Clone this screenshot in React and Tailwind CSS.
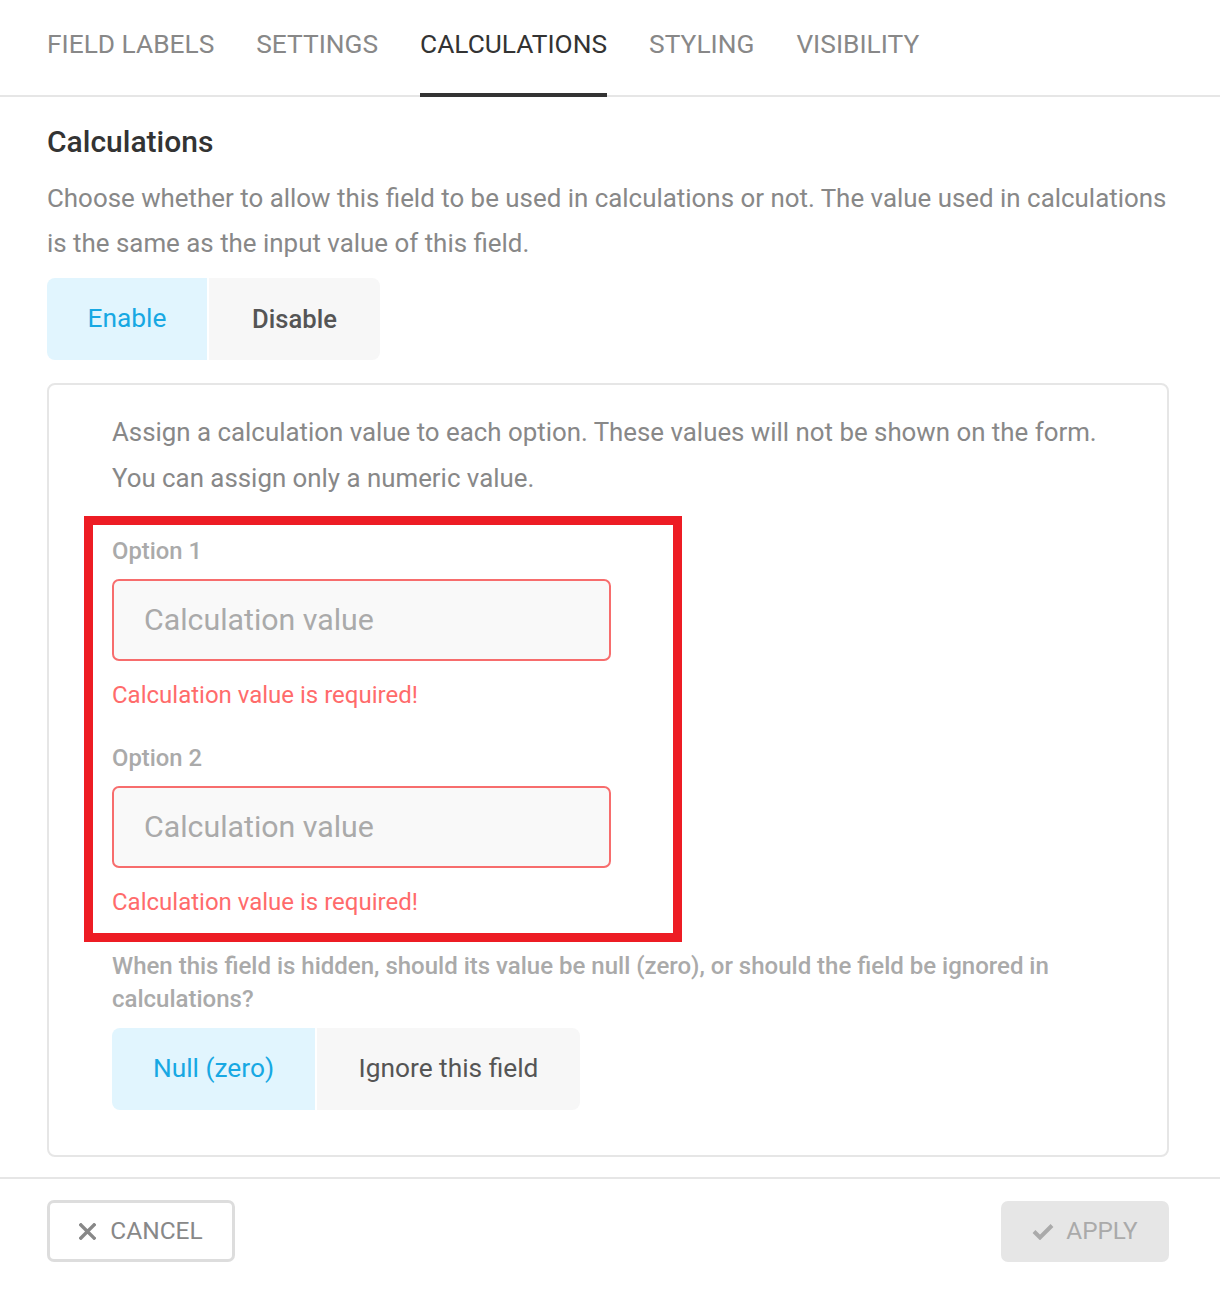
import React from "react";

const tabs = ["FIELD LABELS", "SETTINGS", "CALCULATIONS", "STYLING", "VISIBILITY"];

function OptionField({ label, first }) {
  return (
    <div className={first ? "" : "mt-[35px]"}>
      <div className="text-[23.8px] leading-[28px] font-medium text-[#aaaaaa]">{label}</div>
      <div className="mt-[14px] w-[499px] h-[82px] rounded-[7px] border-2 border-[#f76d6d] bg-[#f9f9f9] flex items-center pl-[30px]">
        <span className="text-[30.3px] text-[#aaaaaa]">Calculation value</span>
      </div>
      <div className="mt-[20px] text-[24px] leading-[28px] text-[#ff6b6b]">Calculation value is required!</div>
    </div>
  );
}

export default function App() {
  return (
    <div className="w-[1220px] h-[1291px] bg-white overflow-hidden" style={{ fontFamily: "Roboto, 'Liberation Sans', sans-serif" }}>
      {/* Tabs */}
      <div className="flex gap-[42px] px-[47px] border-b-2 border-[#e6e6e6] h-[97px]">
        {tabs.map((t) => {
          const active = t === "CALCULATIONS";
          return (
            <div
              key={t}
              className={
                "h-[97px] pt-[28px] text-[26.3px] leading-[32px] " +
                (active ? "text-[#333333] border-b-4 border-[#333333]" : "text-[#888888]")
              }
            >
              {t}
            </div>
          );
        })}
      </div>

      <div className="pl-[47px] pr-[51px]">
        <h2 className="mt-[27px] text-[30px] leading-[36px] font-medium text-[#333333]">Calculations</h2>
        <p className="mt-[16px] text-[25.9px] leading-[45px] text-[#888888]">
          Choose whether to allow this field to be used in calculations or not. The value used in calculations is the same as the input value of this field.
        </p>
        <div className="mt-[12px] flex gap-[2px]">
          <div className="w-[160px] h-[82px] rounded-l-[8px] bg-[#e1f5fe] flex items-center justify-center text-[26.3px] text-[#17a8e3]">Enable</div>
          <div className="w-[171px] h-[82px] rounded-r-[8px] bg-[#f7f7f7] flex items-center justify-center text-[25.6px] font-medium text-[#555555]">Disable</div>
        </div>

        <div className="mt-[23px] border-2 border-[#e6e6e6] rounded-[8px] pl-[63px] pt-[24px] pb-[45px]">
          <p className="text-[25.85px] leading-[46px] text-[#888888] pr-[40px]">
            Assign a calculation value to each option. These values will not be shown on the form. You can assign only a numeric value.
          </p>
          <div className="mt-[15px] -ml-[28px] w-[598px] border-[9px] border-[#ed1c24] pl-[19px] pt-[12px] pb-[17px]">
            <OptionField label="Option 1" first />
            <OptionField label="Option 2" />
          </div>
          <p className="mt-[8px] text-[24px] leading-[33px] font-medium text-[#aaaaaa] pr-[40px]">
            When this field is hidden, should its value be null (zero), or should the field be ignored in calculations?
          </p>
          <div className="mt-[12px] flex gap-[2px]">
            <div className="w-[203px] h-[82px] rounded-l-[8px] bg-[#e1f5fe] flex items-center justify-center text-[26.3px] text-[#17a8e3]">Null (zero)</div>
            <div className="w-[263px] h-[82px] rounded-r-[8px] bg-[#f7f7f7] flex items-center justify-center text-[26.3px] text-[#555555]">Ignore this field</div>
          </div>
        </div>
      </div>

      <div className="mt-[20px] border-t-2 border-[#e6e6e6] pl-[47px] pr-[51px] pt-[21px] flex justify-between">
        <div className="w-[188px] h-[62px] border-[3px] border-[#dddddd] rounded-[7px] flex items-center justify-center gap-[14px] text-[24.5px] text-[#888888]">
          <svg width="17" height="17" viewBox="0 0 18 18" fill="none" stroke="#888888" strokeWidth="3.6" strokeLinecap="square">
            <path d="M2 2 L16 16 M16 2 L2 16" />
          </svg>
          <span>CANCEL</span>
        </div>
        <div className="mt-[1px] w-[168px] h-[61px] bg-[#e6e6e6] rounded-[7px] flex items-center justify-center gap-[12px] text-[24.3px] text-[#aaaaaa]">
          <svg width="22" height="17" viewBox="0 0 22 17" fill="none" stroke="#aaaaaa" strokeWidth="4" strokeLinecap="butt" strokeLinejoin="miter">
            <path d="M2 8.5 L8 14.5 L20 2.5" />
          </svg>
          <span>APPLY</span>
        </div>
      </div>
    </div>
  );
}
